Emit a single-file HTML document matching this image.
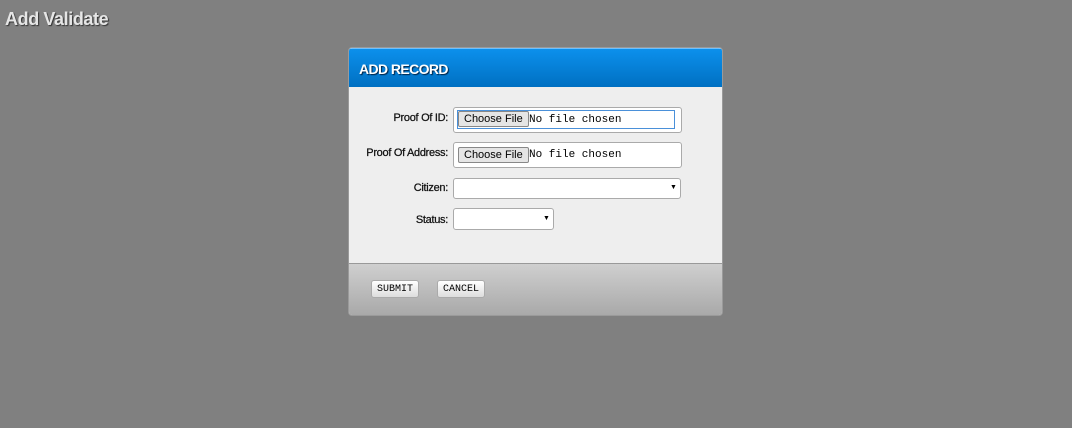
<!DOCTYPE html>
<html><head><style>
*{box-sizing:border-box;margin:0;padding:0}
body{width:1072px;height:428px;background:#808080;font-family:"Liberation Sans",sans-serif;position:relative;overflow:hidden}
h1{position:absolute;left:5px;top:9px;font-size:18px;font-weight:bold;color:#e6e6e6;text-shadow:1px 1px 1px #333;letter-spacing:-0.4px}
.panel{position:absolute;left:348px;top:47px;width:375px;height:269px;border:1px solid #9a9a9a;border-radius:4px;overflow:hidden;background:#eee}
.hdr{height:39px;background:linear-gradient(#0c90ec,#0070c2);border-top:1px solid #6cc0ff;color:#fff;font-weight:bold;font-size:14px;padding:12px 0 0 10px;text-shadow:1px 1px 1px #024;letter-spacing:-0.6px}
.ftr{position:absolute;left:0;right:0;top:215px;bottom:0;border-top:1px solid #999;background:linear-gradient(#cfcfcf,#a9a9a9)}
.lbl{position:absolute;right:274px;font-size:11px;color:#111;letter-spacing:-0.3px;-webkit-text-stroke:0.25px #111}
.box{position:absolute;background:#fff;border:1px solid #aaa;border-radius:3px}
.cf{position:absolute;font-size:11px;background:#e5e5e5;border:1px solid #888;border-radius:2px;padding:1px 5px;color:#000}
.nf{position:absolute;font-family:"Liberation Mono",monospace;font-size:11px}
.arr{position:absolute;font-size:7px;top:5px}
.btn{position:absolute;top:16px;height:18px;font-family:"Liberation Mono",monospace;font-size:10px;border:1px solid #aaa;border-radius:3px;background:linear-gradient(#fff,#ddd);padding:3px 5px 0}
</style></head><body>
<h1>Add Validate</h1>
<div class="panel">
<div class="hdr">ADD RECORD</div>
<div class="lbl" style="top:64px">Proof Of ID:</div>
<div class="box" style="left:104px;top:59px;width:229px;height:26px"></div>
<div style="position:absolute;left:108px;top:62px;width:218px;height:19px;border:1px solid #4a90d9;background:#fff"></div>
<div class="cf" style="left:109px;top:63px">Choose File</div>
<div class="nf" style="left:180px;top:66px">No file chosen</div>
<div class="lbl" style="top:99px">Proof Of Address:</div>
<div class="box" style="left:104px;top:94px;width:229px;height:26px"></div>
<div class="cf" style="left:109px;top:99px">Choose File</div>
<div class="nf" style="left:180px;top:101px">No file chosen</div>
<div class="lbl" style="top:134px">Citizen:</div>
<div class="box" style="left:104px;top:130px;width:228px;height:21px"><span class="arr" style="left:216px">▼</span></div>
<div class="lbl" style="top:166px">Status:</div>
<div class="box" style="left:104px;top:160px;width:101px;height:22px"><span class="arr" style="left:89px;top:6px">▼</span></div>
<div class="ftr">
<div class="btn" style="left:22px">SUBMIT</div>
<div class="btn" style="left:88px">CANCEL</div>
</div>
</div>
</body></html>
